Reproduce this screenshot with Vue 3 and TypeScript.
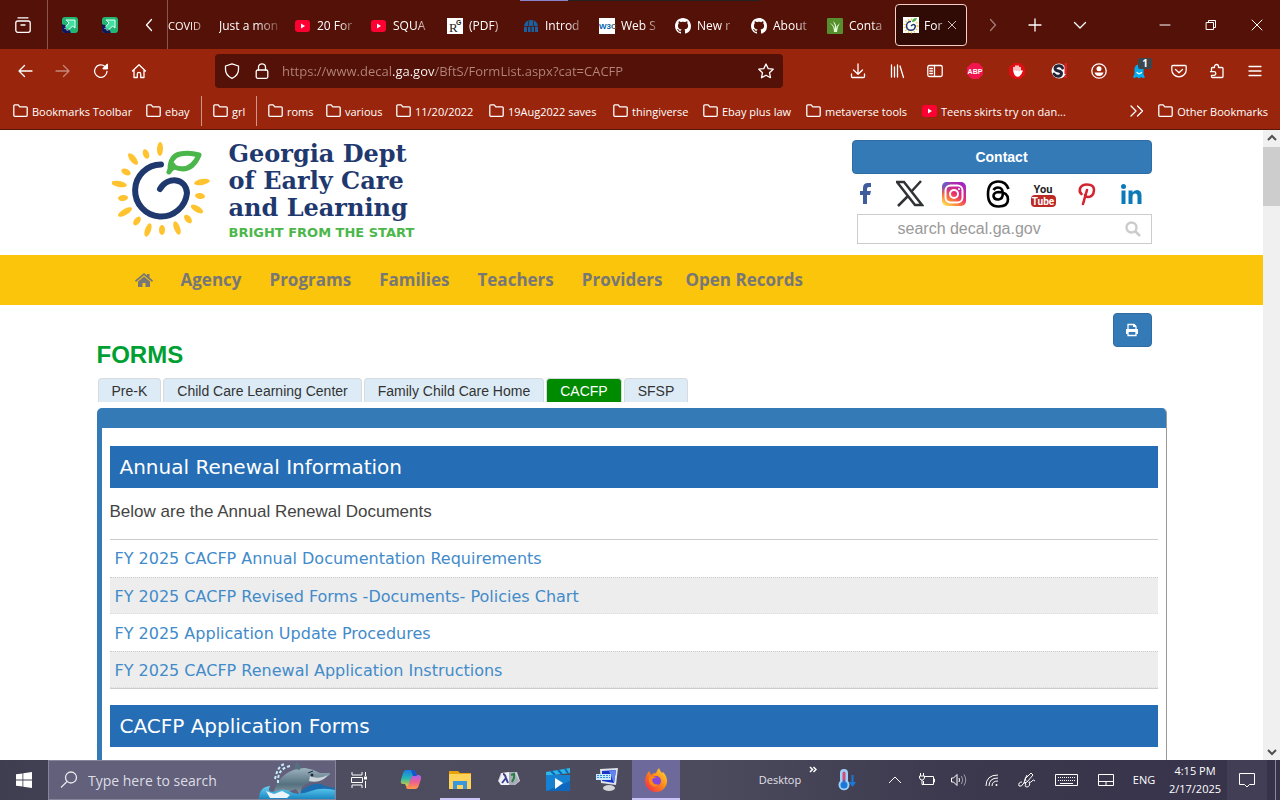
<script setup lang="ts">
import { ref } from 'vue'

interface Tab { title: string; icon?: string; kind?: string }
interface Sized { label: string; icon: string; width: number }

const glyphs: Record<string, string> = {
  pinned: '<rect width="16" height="16" rx="3" fill="#22b573"/><path d="M0 7 6 10 9 16H3Q0 16 0 13Z" fill="#14165c"/><path d="M4 3H13V11L10.500 9 5.500 14 2.500 11 7 6Z" fill="#3fe0a0" stroke="#eafff5" stroke-width="1"/><path d="M2 8l2 6 3-1" fill="none" stroke="#14165c" stroke-width="2" stroke-dasharray="1 1"/>',
  youtube: '<rect x="0" y="2" width="15" height="12" rx="3" fill="#ff0033" stroke="none"/><path d="M6 5.500v5l4-2.500z" fill="#fff" stroke="none"/>',
  rg: '<rect width="16" height="16" fill="#fff"/><text x="2" y="14" font-family="Liberation Serif" font-size="13" fill="#222">R</text><text x="9" y="7" font-family="Liberation Sans" font-size="7" font-weight="bold" fill="#222">G</text>',
  archive: '<g fill="#1a5f9e"><path d="M1 8Q2 2 8 2Q14 2 15 8Z"/><path d="M1 8h3v6H1zM5 8h2.500v6H5zM8.500 8H11v6H8.500zM12 8h3v6h-3z"/></g><path d="M1 8.500h14M5.500 3v5M10.500 3v5" stroke="#541107" stroke-width=".7"/>',
  w3c: '<rect width="16" height="16" fill="#fff"/><text x="0" y="11" font-family="Liberation Sans" font-size="8" font-weight="bold" fill="#0066b0">W3<tspan fill="#555">C</tspan></text>',
  github: '<path fill="#fff" d="M8 0C3.580 0 0 3.580 0 8c0 3.540 2.290 6.530 5.470 7.590.4.070.55-.17.55-.38 0-.19-.01-.82-.01-1.490-2.010.37-2.530-.49-2.690-.94-.09-.23-.48-.94-.82-1.130-.28-.15-.68-.52-.01-.53.63-.01 1.080.58 1.230.82.72 1.210 1.870.87 2.330.66.070-.52.28-.87.51-1.070-1.780-.2-3.640-.89-3.640-3.950 0-.87.31-1.590.82-2.150-.08-.2-.36-1.020.080-2.120 0 0 .67-.21 2.200.82.64-.18 1.320-.27 2-.27s1.360.09 2 .27c1.530-1.040 2.200-.82 2.200-.82.44 1.100.16 1.920.080 2.120.51.56.82 1.270.82 2.150 0 3.070-1.870 3.750-3.650 3.950.29.25.54.73.54 1.480 0 1.070-.01 1.930-.01 2.200 0 .21.15.46.55.38A8 8 0 0 0 16 8c0-4.420-3.580-8-8-8z"/>',
  grass: '<rect width="16" height="16" rx="1" fill="#568f2d"/><path d="M7 14Q7 8 3 5q3 1 5 6Q8 6 6 3q4 3 3 8 1-4 4-6-3 4-3 9z" fill="#e8ffd8"/>',
  decal: '<rect width="16" height="16" fill="#fff"/><circle cx="8" cy="9" r="6.500" fill="none" stroke="#f4bd3a" stroke-width="2" stroke-dasharray="1 2"/><path d="M8 4.500A4.400 4.400 0 1 0 12.300 9Q11 6 8 9" fill="none" stroke="#1e3870" stroke-width="1.600"/><path d="M9 5q0-4 5-4-1 4-5 4z" fill="#4bb549"/>',
  back: '<path d="M15 8H2M7.500 2.500 2 8l5.500 5.500"/>',
  forward: '<path d="M1 8h13M8.500 2.500 14 8l-5.500 5.500"/>',
  reload: '<path d="M14 8.500A6.200 6.200 0 1 1 12 3.500L13.500 5M14.300 1.500V5.500H10.300"/><path d="M14.300 1.500v4h-4z" fill="currentColor"/>',
  home: '<path d="M1.500 8 8 1.700 14.500 8M3 7v7.500h3.300V11a1.700 1.700 0 0 1 3.400 0v3.500H13V7"/>',
  shield: '<path d="M8 .8 14.500 3V6.500C14.500 11 12 13.500 8 15.400 4 13.500 1.500 11 1.500 6.500V3Z"/>',
  lock: '<rect x="2.200" y="7" width="11.600" height="8.300" rx="1.500"/><path d="M4.500 7V4.300a3.500 3.500 0 0 1 7 0V7"/>',
  star: '<path d="m8 1 2.200 4.600 5 .6-3.700 3.500 1 5L8 12.200l-4.500 2.500 1-5L.8 6.200l5-.6z"/>',
  download: '<path d="M8 1v10M3.500 7 8 11.300 12.500 7M1.500 11v2.500a1 1 0 0 0 1 1h11a1 1 0 0 0 1-1V11"/>',
  library: '<path d="M2.500 2v12M5.500 4v10M8.500 2v12M11 3l3.500 11.500"/>',
  sidebar: '<rect x=".8" y="2.500" width="14.400" height="11" rx="1.500"/><path d="M7.500 2.500v11M2.800 5.500h2.700M2.800 8h2.700M2.800 10.500h2.700"/>',
  abp: '<path d="M5 0h6.500L16 4.500v7L11.500 16H5L0 11.500v-7z" fill="#f0154c" stroke="none"/><text x="8" y="10.500" text-anchor="middle" font-family="Liberation Sans" font-size="7" font-weight="bold" fill="#fff" stroke="none">ABP</text>',
  hand: '<path d="M5 0h6.500L16 4.500v7L11.500 16H5L0 11.500v-7z" fill="#e20d13" stroke="none"/><path d="M5 8V4.500M7 8V3M9 8V3M11 9V4.500M5 8q1 5 4 5 2 0 4-5l-2 1-6-1" stroke="#fff" stroke-width="1.500" fill="#fff"/>',
  sbadge: '<circle cx="8" cy="8" r="7.500" fill="#fff" stroke="none"/><path d="M11.500 5Q10.500 2.500 7.500 2.700 4 3 4 5.500 4.200 7.300 7.500 8q3 .7 3 2.500Q10 13.400 7 13.300 4.500 13.200 3 11" stroke="#242438" stroke-width="3"/><path d="M13.500 0h2.500v11h-2.500zM13.500 12.500h2.500V15h-2.500z" fill="#d81f26" stroke="none"/>',
  account: '<circle cx="8" cy="8" r="7.200"/><circle cx="8" cy="5.700" r="2.500" fill="currentColor" stroke="none"/><path d="M3.500 9.500h9q-1 3.500-4.500 3.500t-4.500-3.500z" fill="currentColor" stroke="none"/>',
  ghost: '<path d="M3 15 2 14 3.500 11V6a4.500 4.500 0 0 1 9 0v5l1.500 3.500-2.500.5-1.500-1-2 1.500-2-1.500z" fill="#00aef0" stroke="none"/><path d="M6 9.500q2 2.500 4.500 0" stroke="#e6faff"/>',
  pocket: '<path d="M1.800 2.500h12.400q1 0 1 1V7a7.200 6.800 0 0 1-14.400 0V3.500q0-1 1-1zM4.500 6.500 8 9.700l3.500-3.200"/>',
  puzzle: '<path d="M2.500 7.500V5.500a1 1 0 0 1 1-1H5.500V3.500a2 2 0 0 1 4 0v1h3.500a1 1 0 0 1 1 1v8a1 1 0 0 1-1 1H3.500a1 1 0 0 1-1-1V12.300H5a1.800 1.800 0 0 0 0-3.600H1.500"/>',
  menu: '<path d="M2 3.500h12M2 8h12M2 12.500h12"/>',
  tabsbox: '<path d="M3 .8h10"/><rect x=".8" y="4" width="14.400" height="11.300" rx="2"/><path d="M6 8h4"/>',
  left: '<path d="M10.500 2.500 5.500 8l5 5.500"/>',
  right: '<path d="M5.500 2.500 10.500 8l-5 5.500"/>',
  plus: '<path d="M8 2v12M2 8h12"/>',
  down: '<path d="M2.500 5.500 8 11l5.500-5.500"/>',
  minus: '<path d="M3 8h10" stroke-width="1"/>',
  restore: '<path d="M3.500 5.500h7v7h-7zM5.500 5.500v-2h7v7h-2" stroke-width="1"/>',
  close: '<path d="m3 3 10 10M13 3 3 13" stroke-width="1"/>',
  folder: '<path d="M.8 12.300V2.800q0-1 1-1h3.400l1.600 2h6.400q1 0 1 1v7.500q0 1-1 1H1.800q-1 0-1-1z"/>',
  more: '<path d="m2 3 5 5-5 5M8.500 3l5 5-5 5"/>',
  copilot: '<defs><linearGradient id="ca" x2="0" y2="1"><stop stop-color="#1a7be8"/><stop offset=".5" stop-color="#26b8b0"/><stop offset="1" stop-color="#f5c928"/></linearGradient><linearGradient id="cb" x2="0" y2="1"><stop stop-color="#a861f4"/><stop offset=".5" stop-color="#ee5f91"/><stop offset="1" stop-color="#ff9b45"/></linearGradient></defs><path d="M7 2h7q2 0 3 3l1 3h-3q-2 0-3 3l-2 6q-1 3-3 1l-1-2H4q-3 0-2-4L4 5q1-3 3-3z" fill="url(#ca)"/><path d="M17 7h2q4 0 3 4l-2 6q-1 4-4 4H9q-2 0-2-3 2 1 3-2l2-6q1-3 5-3z" fill="url(#cb)"/><path d="M14 2q2 0 3 3l1 3h-4l-2-6z" fill="#1855c8"/>',
  explorer: '<path d="M1 3h9l2 2h11v4H1z" fill="#e9a10c"/><path d="M1 6h22v15H1z" fill="#ffd25a"/><path d="M5 13h14v8h-4v-4H9v4H5z" fill="#3a97dc"/>',
  lambda: '<path d="M4 5 20 4l3 9-5 4H4l-3-4z" fill="#cdd1da"/><path d="m5 5 7-1v13H4L2 13z" fill="#f3f4f7"/><path d="m12 4 6 1 4 8-5 4h-5z" fill="#a9adb9"/><path d="M6 6q2 0 3 4l2 5M9 10l-4 5" stroke="#3c3f94" stroke-width="2" fill="none"/><path d="m14 7 3-1v4l-2 4" stroke="#287e47" stroke-width="2" fill="none"/>',
  movies: '<path d="M0 4 24 0v5L0 8z" fill="#2db6e8"/><path d="m5 3 4 4M12 2l4 4M19 1l3 4" stroke="#0b65b8" stroke-width="2"/><path d="M0 7h24v16H0z" fill="#0f68bd"/><path d="M0 7h24v6L0 23z" fill="#1681d0"/><path d="m9 10 8 5-8 6z" fill="#fff"/>',
  monitor: '<path d="m5 1 18-1-2 17-15-2z" fill="#dfe3ea"/><path d="m7 3 14-1-2 13-12-2z" fill="#1835c8"/><path d="m14 3 7-1-2 13z" fill="#6186f2"/><ellipse cx="14" cy="20" rx="6" ry="3" fill="#d5d5d8"/><path d="M1 6h15v6H1z" fill="#cce9ff"/><path d="M2 7.500h13M2 9.500h13" stroke="#3092dc" stroke-dasharray="2 1"/>',
  firefox: '<defs><linearGradient id="fa" x1="1" x2="0" y2="1"><stop stop-color="#ffe33d"/><stop offset=".45" stop-color="#ff8a16"/><stop offset="1" stop-color="#ec1e55"/></linearGradient></defs><path d="M3 6 5 3l2 4q2-2 5-2 1-3 3-5 1 3 3 5l1-1q4 4 4 9a11 11 0 0 1-22 0Q1 9 3 6z" fill="url(#fa)"/><circle cx="12" cy="13" r="5" fill="#8348d8"/><path d="M5 9q4-2 8 1-4-1-5 2 2 6 7 4-3 5-8 1Q4 14 5 9z" fill="#ff8717"/>'
}

const tabs: Tab[] = [
  { title: 'COVID', kind: 'cut' },
  { title: 'Just a mon' },
  { title: '20 For', icon: 'youtube' },
  { title: 'SQUA', icon: 'youtube' },
  { title: '(PDF)', icon: 'rg' },
  { title: 'Introd', icon: 'archive' },
  { title: 'Web S', icon: 'w3c' },
  { title: 'New r', icon: 'github' },
  { title: 'About', icon: 'github' },
  { title: 'Conta', icon: 'grass' },
  { title: 'For', icon: 'decal', kind: 'active' }
]
const tools: Sized[] = [
  { label: 'Downloads', icon: 'download', width: 40 },
  { label: 'Library', icon: 'library', width: 38 },
  { label: 'Sidebars', icon: 'sidebar', width: 38 },
  { label: 'Adblock Plus', icon: 'abp', width: 42 },
  { label: 'AdBlock', icon: 'hand', width: 42 },
  { label: 'Script blocker', icon: 'sbadge', width: 42 },
  { label: 'Account', icon: 'account', width: 38 },
  { label: 'Ghostery', icon: 'ghost', width: 42 },
  { label: 'Pocket', icon: 'pocket', width: 38 },
  { label: 'Extensions', icon: 'puzzle', width: 38 },
  { label: 'Menu', icon: 'menu', width: 38 }
]
const bookmarks: Sized[] = [
  { label: 'Bookmarks Toolbar', icon: 'folder', width: 133 },
  { label: 'ebay', icon: 'folder', width: 55 },
  { label: '', icon: '', width: 12 },
  { label: 'grl', icon: 'folder', width: 43 },
  { label: '', icon: '', width: 12 },
  { label: 'roms', icon: 'folder', width: 58 },
  { label: 'various', icon: 'folder', width: 70 },
  { label: '11/20/2022', icon: 'folder', width: 93 },
  { label: '19Aug2022 saves', icon: 'folder', width: 124 },
  { label: 'thingiverse', icon: 'folder', width: 90 },
  { label: 'Ebay plus law', icon: 'folder', width: 103 },
  { label: 'metaverse tools', icon: 'folder', width: 116 },
  { label: 'Teens skirts try on dan...', icon: 'youtube', width: 160 }
]
const menu = ['Agency', 'Programs', 'Families', 'Teachers', 'Providers', 'Open Records']
const categories = ['Pre-K', 'Child Care Learning Center', 'Family Child Care Home', 'CACFP', 'SFSP']
const current = ref('CACFP')
const documents = [
  'FY 2025 CACFP Annual Documentation Requirements',
  'FY 2025 CACFP Revised Forms -Documents- Policies Chart',
  'FY 2025 Application Update Procedures',
  'FY 2025 CACFP Renewal Application Instructions'
]
const apps = ['copilot', 'explorer', 'lambda', 'movies', 'monitor', 'firefox']
const address = ref('https://www.decal.ga.gov/BftS/FormList.aspx?cat=CACFP')
const siteQuery = ref('')
const systemQuery = ref('')
</script>

<template>
  <div class="screen">
    <header class="chrome">
      <div class="tabbar">
        <div class="loading"></div>
        <button class="cell recent" aria-label="Recent browsing"><svg class="ico line" viewBox="0 0 16 16" v-html="glyphs.tabsbox" /></button>
        <div class="pins">
          <button class="cell pin" aria-label="Pinned tab"><svg class="ico" viewBox="0 0 16 16" v-html="glyphs.pinned" /></button>
          <button class="cell pin" aria-label="Pinned tab"><svg class="ico" viewBox="0 0 16 16" v-html="glyphs.pinned" /></button>
          <button class="cell scroll-left" aria-label="Scroll tabs left"><svg class="ico line" viewBox="0 0 16 16" v-html="glyphs.left" /></button>
        </div>
        <div class="tabs">
          <div v-for="t in tabs" :key="t.title" class="tab" :class="t.kind">
            <svg v-if="t.icon" class="ico" viewBox="0 0 16 16" v-html="glyphs[t.icon]" />
            <span class="tab-title">{{ t.title }}</span>
            <button v-if="t.kind === 'active'" class="tab-close" aria-label="Close tab"><svg class="ico line small" viewBox="0 0 16 16" v-html="glyphs.close" /></button>
          </div>
        </div>
        <button class="cell mid dim" aria-label="Scroll tabs right"><svg class="ico line" viewBox="0 0 16 16" v-html="glyphs.right" /></button>
        <button class="cell mid" aria-label="New tab"><svg class="ico line" viewBox="0 0 16 16" v-html="glyphs.plus" /></button>
        <button class="cell wide" aria-label="List all tabs"><svg class="ico line" viewBox="0 0 16 16" v-html="glyphs.down" /></button>
        <div class="window-buttons">
          <button class="cell win" aria-label="Minimize"><svg class="ico line" viewBox="0 0 16 16" v-html="glyphs.minus" /></button>
          <button class="cell win" aria-label="Restore"><svg class="ico line" viewBox="0 0 16 16" v-html="glyphs.restore" /></button>
          <button class="cell win" aria-label="Close"><svg class="ico line" viewBox="0 0 16 16" v-html="glyphs.close" /></button>
        </div>
      </div>

      <div class="navbar">
        <button class="cell nav-btn" aria-label="Back"><svg class="ico line" viewBox="0 0 16 16" v-html="glyphs.back" /></button>
        <button class="cell nav-btn dim" aria-label="Forward"><svg class="ico line" viewBox="0 0 16 16" v-html="glyphs.forward" /></button>
        <button class="cell nav-btn" aria-label="Reload"><svg class="ico line" viewBox="0 0 16 16" v-html="glyphs.reload" /></button>
        <button class="cell nav-btn" aria-label="Home"><svg class="ico line" viewBox="0 0 16 16" v-html="glyphs.home" /></button>
        <div class="urlbar">
          <svg class="ico line" viewBox="0 0 16 16" v-html="glyphs.shield" />
          <svg class="ico line" viewBox="0 0 16 16" v-html="glyphs.lock" />
          <input v-model="address" class="address" type="text" aria-label="Address" spellcheck="false" />
          <button class="cell star" aria-label="Bookmark this page"><svg class="ico line" viewBox="0 0 16 16" v-html="glyphs.star" /></button>
        </div>
        <button v-for="t in tools" :key="t.label" class="cell tool" :aria-label="t.label" :style="{ width: t.width + 'px' }">
          <svg class="ico line" viewBox="0 0 16 16" v-html="glyphs[t.icon]" />
          <span v-if="t.icon === 'ghost'" class="badge">1</span>
        </button>
      </div>

      <nav class="bookmarks" aria-label="Bookmarks">
        <template v-for="(b, i) in bookmarks" :key="i">
          <a v-if="b.label" href="#" class="bookmark" :style="{ width: b.width + 'px' }">
            <svg class="ico line" viewBox="0 0 16 16" v-html="glyphs[b.icon]" />{{ b.label }}
          </a>
          <span v-else class="divider" :style="{ width: b.width + 'px' }"></span>
        </template>
        <button class="cell more" aria-label="More bookmarks"><svg class="ico line" viewBox="0 0 16 16" v-html="glyphs.more" /></button>
        <a href="#" class="bookmark"><svg class="ico line" viewBox="0 0 16 16" v-html="glyphs.folder" />Other Bookmarks</a>
      </nav>
    </header>

    <div class="viewport">
      <main class="site">
        <div class="site-header wrap">
          <a href="#" class="brand" aria-label="Georgia Dept of Early Care and Learning home">
            <svg class="sun" viewBox="0 0 100 98">
              <g fill="#fec32e">
                <ellipse cx="48" cy="7" rx="3" ry="7" transform="rotate(2 48 7)" />
                <ellipse cx="34" cy="12" rx="3" ry="5" transform="rotate(-20 34 12)" />
                <ellipse cx="21" cy="17" rx="3" ry="7" transform="rotate(-39 21 17)" />
                <ellipse cx="14" cy="30" rx="3" ry="5" transform="rotate(-64 14 30)" />
                <ellipse cx="7" cy="42" rx="3" ry="8" transform="rotate(-80 7 42)" />
                <ellipse cx="11" cy="56" rx="3" ry="5" transform="rotate(-96 11 56)" />
                <ellipse cx="13" cy="70" rx="3" ry="8" transform="rotate(59 13 70)" />
                <ellipse cx="25" cy="79" rx="3" ry="5" transform="rotate(37 25 79)" />
                <ellipse cx="36" cy="88" rx="3" ry="7" transform="rotate(19 36 88)" />
                <ellipse cx="50" cy="88" rx="3" ry="5" />
                <ellipse cx="65" cy="86" rx="3" ry="7" transform="rotate(-21 65 86)" />
                <ellipse cx="76" cy="77" rx="3" ry="5" transform="rotate(-39 76 77)" />
                <ellipse cx="85" cy="67" rx="3" ry="7" transform="rotate(-59 85 67)" />
                <ellipse cx="88" cy="54" rx="3" ry="5" transform="rotate(-82 88 54)" />
                <ellipse cx="90" cy="40" rx="3" ry="8" transform="rotate(80 90 40)" />
              </g>
              <path d="M49 22.500A26 26 0 1 0 75 51C74 36 56 34 48 47" fill="none" stroke="#1f396f" stroke-width="6" stroke-linecap="round" />
              <path d="M58 28Q58 14 68 12Q77 10 87 13Q79 32 62 25Z" fill="none" stroke="#4bb74a" stroke-width="5" stroke-linejoin="round" />
              <path d="m57 30 4-7" stroke="#4bb74a" stroke-width="5" stroke-linecap="round" />
            </svg>
            <span class="brand-text">
              <span class="brand-name">Georgia Dept<br />of Early Care<br />and Learning</span>
              <span class="brand-tag">BRIGHT FROM THE START</span>
            </span>
          </a>
          <div class="reach">
            <button class="contact">Contact</button>
            <div class="social">
              <a href="#" aria-label="Facebook"><svg width="28" height="32" viewBox="0 0 28 32"><path d="M11 26V17H8v-4h3v-3q0-5 5-5h3v4h-2q-2 0-2 2v2h4l-1 4h-3v9z" fill="#3f5c9d" /></svg></a>
              <a href="#" aria-label="X"><svg width="28" height="32" viewBox="0 0 28 32"><path d="M1 4h7l18 23h-7zM25 3 15 14M12 18 2 28" fill="none" stroke="#303236" stroke-width="2.500" /></svg></a>
              <a href="#" aria-label="Instagram"><svg width="28" height="32" viewBox="0 0 28 32"><defs><linearGradient id="ig" x1=".8" y1="0" x2=".2" y2="1"><stop stop-color="#9b26c8" /><stop offset=".45" stop-color="#e62a72" /><stop offset=".75" stop-color="#fb7b3a" /><stop offset="1" stop-color="#ffdd55" /></linearGradient><radialGradient id="ib" cx="0" cy="0" r=".5"><stop stop-color="#3a6fe8" /><stop offset="1" stop-color="#3a6fe8" stop-opacity="0" /></radialGradient></defs><rect x="2" y="4" width="24" height="24" rx="5" fill="url(#ig)" /><rect x="2" y="4" width="24" height="24" rx="5" fill="url(#ib)" /><rect x="5.500" y="7.500" width="17" height="17" rx="5" fill="none" stroke="#fff" stroke-width="2" /><circle cx="14" cy="16" r="4" fill="none" stroke="#fff" stroke-width="2" /><circle cx="19" cy="11" r="1" fill="#fff" /></svg></a>
              <a href="#" aria-label="Threads"><svg width="28" height="32" viewBox="0 0 28 32"><path d="M24.500 11Q22 3.500 14.500 3.500 4 3.500 4 16T14.500 28.500q9.500 0 9.500-7Q24 14 14.500 14 9.500 14.500 9.500 18q.5 3.800 5 3.500 4.500-.5 4.300-6.500Q18.500 9.500 14 9.500q-3 0-4.500 2.500" fill="none" stroke="#000" stroke-width="2.600" /></svg></a>
              <a href="#" aria-label="YouTube"><svg width="28" height="32" viewBox="0 0 28 32"><rect x="2" y="17" width="25" height="12" rx="4" fill="#bd2925" /><g font-family="Roboto, sans-serif" font-weight="bold" text-anchor="middle"><text x="14" y="15" font-size="11" fill="#222">You</text><text x="14" y="27" font-size="10" fill="#fff">Tube</text></g></svg></a>
              <a href="#" aria-label="Pinterest"><svg width="28" height="32" viewBox="0 0 28 32"><path d="m10 26 4-14M8.500 16Q6 14 7 10.500 8.500 6.500 14 6.500q7 0 7 5.500-.5 7-6 7-2.500 0-3-2" fill="none" stroke="#d42430" stroke-width="2.600" stroke-linecap="round" /></svg></a>
              <a href="#" aria-label="LinkedIn"><svg width="28" height="32" viewBox="0 0 28 32"><g fill="#0c7ab8"><circle cx="6.500" cy="8.500" r="2.500" /><path d="M4.500 12.500h4V26h-4zM11.500 12.500h4v2Q17 12 20 12q4.500.2 4.500 5.500V26h-4v-7.500q0-3-2.300-3-2.700.2-2.700 3.500v7h-4z" /></g></svg></a>
            </div>
            <form class="site-search" @submit.prevent>
              <input v-model="siteQuery" type="text" aria-label="Search decal.ga.gov" placeholder="search decal.ga.gov" />
              <button aria-label="Search"><svg width="16" height="16" viewBox="0 0 16 16"><circle cx="6.500" cy="6.500" r="5" fill="none" stroke="#ccc" stroke-width="2.400" /><path d="m10 10 5 5" stroke="#ccc" stroke-width="2.600" /></svg></button>
            </form>
          </div>
        </div>

        <nav class="main-menu" aria-label="Main">
          <div class="wrap menu-row">
            <a href="#" class="home" aria-label="Home"><svg width="18" height="14" viewBox="0 0 18 14"><path d="M9 3.500 15 8.500V14h-4.500v-4h-3v4H3V8.500z M9 0l3 2.500V1h2.500v3.500L18 7.500 17 9 9 2.300 1 9 0 7.500z" fill="#777" /></svg></a>
            <a v-for="m in menu" :key="m" href="#" class="menu-link">{{ m }}</a>
          </div>
        </nav>

        <div class="wrap">
          <div class="title-row">
            <h1>FORMS</h1>
            <button class="print" aria-label="Print"><svg width="14" height="14" viewBox="0 0 14 14"><path d="M3 6V1.500h6L11 3.500V6" fill="none" stroke="#fff" stroke-width="1.300" /><path d="M1 6h12v5H11V9H3v2H1z" fill="#fff" /><path d="M3 9v3.500h8V9" fill="none" stroke="#fff" stroke-width="1.300" /><path d="M8 1h1l2 2v1H8z" fill="#fff" /></svg></button>
          </div>
          <div class="categories" role="tablist">
            <button v-for="c in categories" :key="c" class="category" role="tab" :aria-selected="c === current" :class="{ on: c === current }" @click="current = c">{{ c }}</button>
          </div>
          <div class="panel">
            <div class="panel-bar"></div>
            <section>
              <h2>Annual Renewal Information</h2>
              <p>Below are the Annual Renewal Documents</p>
              <table>
                <tbody>
                  <tr v-for="d in documents" :key="d"><td><a href="#">{{ d }}</a></td></tr>
                </tbody>
              </table>
            </section>
            <section>
              <h2>CACFP Application Forms</h2>
            </section>
          </div>
        </div>
      </main>
      <div class="scrollbar">
        <svg width="17" height="17" viewBox="0 0 17 17"><path d="m5 10 4-4 4 4" fill="none" stroke="#505050" stroke-width="2" /></svg>
        <div class="thumb"></div>
        <svg class="scroll-end" width="17" height="17" viewBox="0 0 17 17"><path d="m5 7 4 4 4-4" fill="none" stroke="#505050" stroke-width="2" /></svg>
      </div>
    </div>

    <footer class="taskbar">
      <button class="task start" aria-label="Start"><svg width="16" height="16" viewBox="0 0 16 16"><path d="M0 2.300 6.500 1.400v6.200H0zM7.300 1.300 16 0v7.600H7.300zM0 8.400h6.500v6.200L0 13.700zM7.300 8.400H16V16l-8.700-1.300z" fill="#fff" /></svg></button>
      <label class="system-search">
        <svg width="18" height="18" viewBox="0 0 18 18"><circle cx="11" cy="6.500" r="5.500" fill="none" stroke="#e8e8ee" stroke-width="1.300" /><path d="m7 10.500-6 6" stroke="#e8e8ee" stroke-width="1.300" /></svg>
        <input v-model="systemQuery" type="text" aria-label="Type here to search" placeholder="Type here to search" />
        <svg class="dolphin" width="78" height="38" viewBox="0 0 78 38">
          <defs>
            <linearGradient id="dg" x2="0" y2="1"><stop stop-color="#9db3c0" /><stop offset=".6" stop-color="#55707f" /><stop offset="1" stop-color="#8c9ca6" /></linearGradient>
            <linearGradient id="wg" x2="0" y2="1"><stop stop-color="#66d2f5" /><stop offset="1" stop-color="#1a87c2" /></linearGradient>
          </defs>
          <path d="M44 30q12-10 22-6t12 2v12H30z" fill="#1c6db0" />
          <path d="M17 30Q24 8 48 7q8 1 15 5l10 0q1 2-5 5-5 4-15 4-4 2-8 5l-2 8-4-6Q28 33 17 30z" fill="url(#dg)" />
          <path d="M38 8q-1-5 2-7 4 3 3 8z" fill="#55707f" />
          <path d="M53 15q8 4 18-1-7 9-19 6z" fill="#ccd5da" />
          <circle cx="55" cy="14" r="1.500" fill="#1d2a38" /><path d="m51 12 5-2" stroke="#1d2a38" />
          <path d="M2 38q0-12 11-13Q9 33 20 30q8-4 16 2 8 2 18-2 10-4 24-1v9z" fill="url(#wg)" />
          <path d="m9 30 8 3 8-3 8 4-3 3H13z" fill="#eaf6fc" />
          <path d="M21 22q-1-14 12-17M18 18q3-14 10-15" fill="none" stroke="#c6ecfc" stroke-width="2" stroke-dasharray="3 2" />
        </svg>
      </label>
      <button class="task view" aria-label="Task view"><svg width="18" height="16" viewBox="0 0 18 16"><path d="M1 0v3h10V0M1 16v-3h10v3M.500 5.500h11v5H.500zM14.500 0v4M14.500 9v7" fill="none" stroke="#fff" /><path d="M13 4.500h3v3h-3z" fill="#fff" /></svg></button>
      <div class="apps">
        <button v-for="a in apps" :key="a" class="task app" :class="a" :aria-label="a"><svg width="24" height="24" viewBox="0 0 24 24" v-html="glyphs[a]" /></button>
      </div>
      <div class="tray">
        <span class="w52 desk">Desktop</span>
        <button class="w20 raise" aria-label="More toolbars"><svg width="8" height="7" viewBox="0 0 8 7"><path d="m1 1 2.500 2.500L1 6M4.500 1 7 3.500 4.500 6" fill="none" stroke="#fff" stroke-width="1.500" /></svg></button>
        <button class="w44" aria-label="Weather"><svg width="20" height="24" viewBox="0 0 20 24"><path d="M3 5a4 4 0 0 1 8 0v8a5.500 5.500 0 1 1-8 0z" fill="#9fd0f5" stroke="none" /><circle cx="7" cy="17" r="3.500" fill="#1978dc" /><path class="warm" d="M7 14V5" /><path class="cold" d="M7 17v-5M15.500 7v9" /><path class="cold-fill" d="M12 14h7l-3.500 5z" /></svg></button>
        <button class="w46 lift" aria-label="Show hidden icons"><svg width="14" height="8" viewBox="0 0 14 8"><path d="m1 7 6-6 6 6" /></svg></button>
        <button class="w24" aria-label="Battery"><svg width="16" height="14" viewBox="0 0 16 14"><path d="M6 3.500h8.500v8h-10V8M14.500 6h1v3h-1M1.500 0v3M4.500 0v3M.500 3h5v2L4 7H2L.500 5zM3 7v4.500h2" /></svg></button>
        <button class="w40" aria-label="Volume"><svg width="16" height="14" viewBox="0 0 16 14"><path d="M.500 5h2L6 1.500v11L2.500 9h-2zM8 5q1 2 0 4" /><path d="M10.500 3q2.500 4 0 8M13 1.500q3.500 5.500 0 11" opacity=".5" /></svg></button>
        <button class="w26" aria-label="Network"><svg width="14" height="14" viewBox="0 0 14 14"><path d="M1 13Q1 2 13 2M4 13q0-8 9-8M7 13q0-5 6-5" /><circle cx="11.500" cy="12" r="1" fill="#fff" /></svg></button>
        <button class="w44" aria-label="Pen"><svg width="18" height="16" viewBox="0 0 18 16"><path d="m6 11 1-4 6-6 2 2-6 7zM1 14q-1-4 3-4M1 14q3 1 4-2t3 0q-2 3 1 3 4-1 2-5 2 1 3-1t3 0M9 3q-3 4-1 6" /></svg></button>
        <button class="w36" aria-label="Keyboard"><svg width="24" height="14" viewBox="0 0 24 14"><path d="M.500 1.500h22v11H.500zM5 10.500h13" /><path d="M3 4.500h18M3 7.500h18" stroke-dasharray="1 1" /></svg></button>
        <button class="w42" aria-label="Touchpad"><svg width="16" height="12" viewBox="0 0 16 12"><path d="M.500.500h15v11H.500zM.500 7.500h15M8 7.500v4" /></svg></button>
        <span class="w34">ENG</span>
        <time class="w66 clock" datetime="2025-02-17T16:15">4:15 PM<br />2/17/2025</time>
        <button class="w40 note" aria-label="Notifications"><svg width="18" height="18" viewBox="0 0 18 18"><path d="M1.500 2.500h15v11h-5L9 16l-2.500-2.500h-5z" /></svg></button>
        <span class="peek"></span>
      </div>
    </footer>
  </div>
</template>

<style>
body { margin: 0; }
</style>

<style scoped>
.screen { display: flex; flex-direction: column; height: 100vh; overflow: hidden; font-family: "Open Sans", "Noto Sans", sans-serif; font-size: 11px; background: #fff; }
.screen * { box-sizing: border-box; }
button { margin: 0; padding: 0; border: 0; background: none; color: inherit; font: inherit; }
input { min-width: 0; margin: 0; padding: 0; border: 0; background: none; outline: 0; font: inherit; }
a { text-decoration: none; color: inherit; }
svg { display: block; flex: none; }
.ico { width: 16px; height: 16px; overflow: visible; }
.line { fill: none; stroke: currentColor; stroke-width: 1.3; stroke-linecap: round; stroke-linejoin: round; }
.small { width: 12px; height: 12px; }
.cell { display: flex; flex: none; align-items: center; justify-content: center; height: 100%; }
.dim { opacity: .45; }

.chrome { flex: none; background: #98250c; color: #fff; border-bottom: 1px solid #5a1408; }
.tabbar { position: relative; display: flex; height: 49px; background: #541107; }
.loading { position: absolute; top: 0; left: 520px; width: 240px; height: 1px; background: linear-gradient(90deg, #8a83cc 48px, #222 48px); }
.recent { width: 48px; padding-right: 1px; border-right: 1px solid #87564f; }
.pins { display: flex; flex: none; padding-left: 2px; border-right: 1px solid #87564f; }
.pin { width: 40px; }
.scroll-left { width: 37px; }
.tabs { display: flex; flex: none; width: 804px; overflow: hidden; }
.tab { display: flex; flex: none; align-items: center; gap: 6px; width: 76px; padding: 2px 8px 0; font-size: 12px; }
.tab.cut { width: 43px; padding: 2px 4px 0 0; font-size: 11px; }
.tab.active { width: 72px; height: 42px; margin-top: 4px; padding: 0 8px 0 7px; gap: 5px; border: 1px solid #f5cfc5; border-radius: 4px; background: #300a04; }
.tab-title { flex: 1; min-width: 0; overflow: hidden; white-space: nowrap; mask-image: linear-gradient(90deg, #000 60%, rgba(0, 0, 0, .2)); }
.tab.active .tab-title { margin-right: -5px; }
.mid { width: 42px; }
.wide { width: 48px; }
.window-buttons { display: flex; margin-left: auto; }
.win { width: 46px; }

.navbar { display: flex; align-items: center; height: 44px; padding: 0 6px; }
.nav-btn { width: 38px; }
.urlbar { display: flex; flex: 1; align-items: center; height: 34px; margin: 0 55px 0 57px; padding-left: 9px; gap: 14px; border-radius: 4px; background: #541107; }
.address { flex: 1; margin-left: -2px; height: 34px; font-size: 13px; color: transparent; caret-color: #fff; background: linear-gradient(90deg, #b3857c 111px, #fff 111px, #fff 153px, #b3857c 153px); background-clip: text; -webkit-background-clip: text; }
.star { width: 34px; }
.tool { position: relative; }
.badge { position: absolute; top: 9px; right: 8px; width: 14px; height: 11px; border-radius: 2px; background: #3d454d; font-size: 10px; font-weight: 700; line-height: 11px; text-align: center; }
.bookmarks { display: flex; align-items: center; height: 36px; padding: 0 12px 0 13px; }
.bookmark { display: flex; flex: none; align-items: center; gap: 3px; white-space: nowrap; }
.divider { flex: none; height: 30px; border-left: 1px solid #d0968a; }
.more { width: 42px; margin-left: auto; }

.viewport { display: flex; flex: 1; min-height: 0; background: #fff; font-family: "Liberation Sans", Arial, sans-serif; }
.site { flex: 1; min-width: 0; overflow: hidden; }
.wrap { max-width: 1070px; margin: 0 auto; }
.site-header { display: flex; justify-content: space-between; height: 125px; padding: 10px 15px 0; }
.brand { display: flex; align-items: flex-start; }
.sun { width: 100px; height: 98px; margin-top: 2px; }
.brand-text { display: flex; flex-direction: column; margin-left: 17px; }
.brand-name { font: 700 24px/27px "DejaVu Serif", serif; color: #1f396f; white-space: nowrap; }
.brand-tag { margin-top: 4px; font: 700 13px/16px "DejaVu Sans", sans-serif; color: #4bb74a; white-space: nowrap; }
.reach { display: flex; flex-direction: column; width: 300px; }
.contact { height: 34px; border: 1px solid #2e6da4; border-radius: 4px; background: #337ab7; color: #fff; font-size: 14px; font-weight: 700; }
.social { display: flex; justify-content: space-between; height: 40px; padding: 4px 6px 0 0; }
.site-search { display: flex; align-items: center; height: 30px; margin-left: 5px; padding: 0 10px 0 40px; border: 1px solid #ccc; background: #fff; }
.site-search input { flex: 1; height: 28px; font-size: 16px; color: #555; }
.site-search input::placeholder { color: #999; opacity: 1; }

.main-menu { background: #fbc50b; }
.menu-row { display: flex; align-items: center; gap: 28px; height: 50px; padding-left: 38px; font: 700 17px/24px "Open Sans", "Noto Sans", sans-serif; color: #777; }
.menu-link:last-child { margin-left: -5px; }

.title-row { display: flex; align-items: flex-start; justify-content: space-between; height: 73px; padding: 8px 15px 0 0; }
h1 { margin: 28px 0 0; font-size: 24px; line-height: 28px; color: #009f33; }
.print { display: flex; align-items: center; justify-content: center; width: 39px; height: 34px; border: 1px solid #2e6da4; border-radius: 4px; background: #337ab7; }
.categories { display: flex; gap: 2px; margin-bottom: 6px; padding-left: 1px; }
.category { height: 24px; padding: 1px 13px 0; border: 1px solid #d6dbe0; border-bottom: 0; border-radius: 4px 4px 0 0; background: #dcebf6; color: #333; font-size: 14px; }
.category.on { background: #008a00; color: #fff; }
.panel { overflow: hidden; border-left: 5px solid #337ab7; border-right: 1px solid #999; border-radius: 5px 5px 0 0; }
.panel-bar { height: 20px; margin-bottom: 18px; background: #337ab7; }
section { padding: 0 8px 16px; }
h2 { margin: 0; padding: 0 10px; background: #256db5; color: #fff; font: 400 20px/42px "DejaVu Sans", Verdana, sans-serif; }
p { margin: 12px 0 16px; font-size: 17px; line-height: 23px; color: #444; }
table { width: 100%; border-top: 1px solid #ccc; border-bottom: 1px solid #ccc; border-spacing: 0; }
td { height: 37px; padding: 0 5px; font: 16px/20px "DejaVu Sans", Verdana, sans-serif; color: #428bca; }
tr:not(:first-child) td { padding-top: 2px; }
tr:nth-child(even) td { border-top: 1px dotted #ccc; border-bottom: 1px dotted #ddd; background: #ededed; }
.scrollbar { display: flex; flex: none; flex-direction: column; width: 17px; background: #f0f0f0; }
.thumb { height: 59px; background: #cdcdcd; }
.scroll-end { margin-top: auto; }

.taskbar { display: flex; flex: none; height: 40px; background: linear-gradient(90deg, #3f3d50, #4e4c5f 25%, #4c4a5d 55%, #3c394e 75%, #35324a); color: #fff; }
.task { display: flex; align-items: center; justify-content: center; width: 48px; }
.start, .view { flex: none; }
.system-search { display: flex; flex: none; align-items: center; width: 288px; padding-left: 11px; border: 1px solid #87859b; background: #62607a; }
.system-search input { flex: 1; margin-left: 10px; font-size: 14px; }
.system-search input::placeholder { color: #dddde6; opacity: 1; }
.apps { display: flex; gap: 1px; margin-left: 3px; }
.app.firefox { border-bottom: 2px solid #c9c3f8; background: #6d6a9b; padding-top: 2px; }
.app.explorer { width: 40px; margin: 0 4px; padding-top: 2px; border-bottom: 2px solid #c9c3f8; }
.tray { display: flex; margin-left: auto; line-height: 18px; }
.tray > * { display: flex; flex: none; align-items: center; justify-content: center; }
.tray svg { fill: none; stroke: #fff; stroke-width: 1; }
.tray svg circle { stroke: none; }
.tray .warm { stroke: #d44a7a; stroke-width: 3; stroke-linecap: round; }
.tray .cold { stroke: #1978dc; stroke-width: 2; }
.tray .cold-fill { fill: #1978dc; stroke: none; }
.tray .raise { align-items: flex-start; padding: 6px 4px 0 0; }
.tray .lift { padding-left: 5px; }
.desk { padding-left: 2px; color: #e2e2ea; }
.w20 { width: 20px; } .w24 { width: 24px; } .w26 { width: 26px; } .w34 { width: 34px; } .w36 { width: 36px; }
.w40 { width: 40px; } .w42 { width: 42px; } .w44 { width: 44px; } .w46 { width: 46px; } .w52 { width: 52px; } .w66 { width: 66px; }
.clock { padding-left: 2px; text-align: center; }
.note { background: #413e55; }
.peek { width: 5px; margin-left: 8px; border-left: 1px solid #8a889a; }
</style>
